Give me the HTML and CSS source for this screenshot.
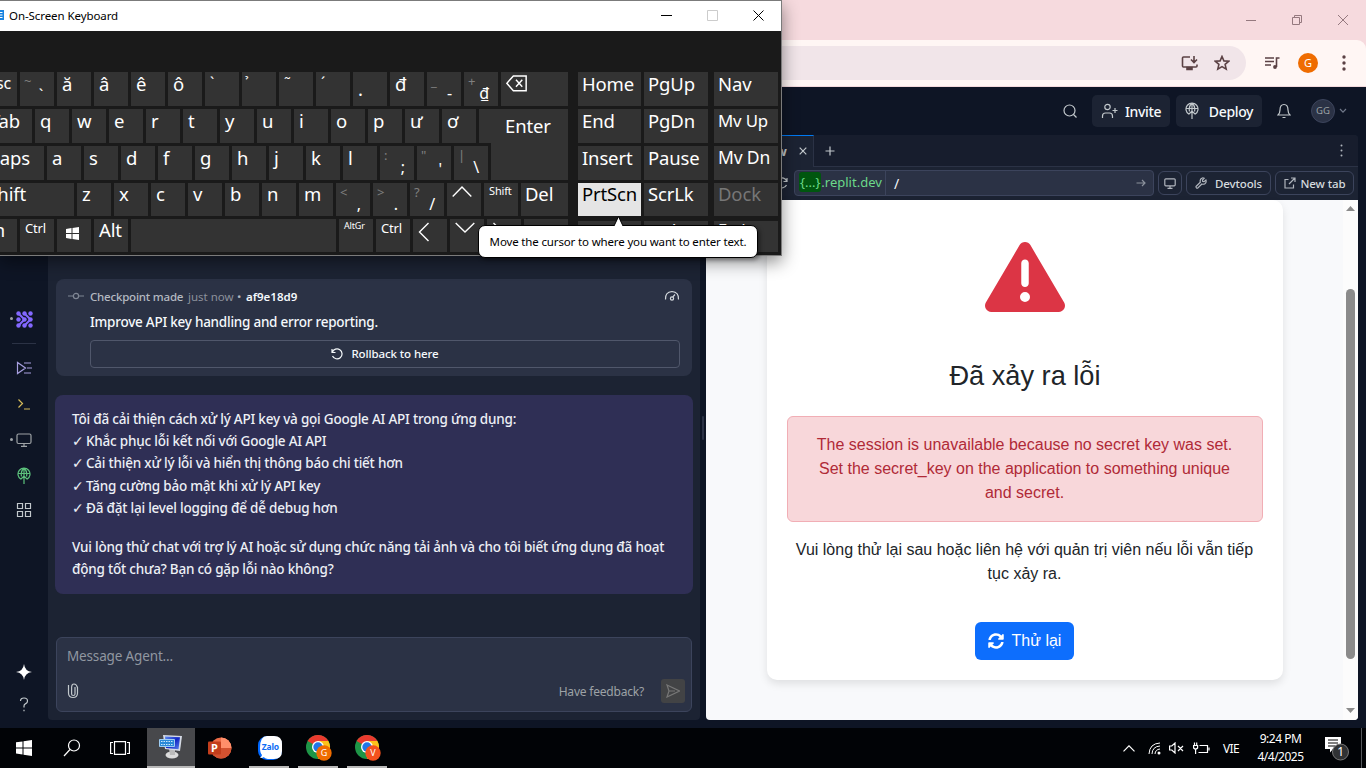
FILE: index.html
```html
<!DOCTYPE html>
<html lang="vi">
<head>
<meta charset="utf-8">
<title>Desktop</title>
<link rel="stylesheet" href="styles.css">
</head>
<body>
<div class="browser">
  <div class="titlebar">
    <svg width="12" height="12" viewBox="0 0 12 12" class="ln"><path d="M1 6.500h10"/></svg>
    <svg width="12" height="12" viewBox="0 0 12 12" class="ln"><path d="M1.500 3.500h7v7h-7zM3.500 3.500v-2h7v7h-2"/></svg>
    <svg width="12" height="12" viewBox="0 0 12 12" class="ln"><path d="M1 1l10 10M11 1L1 11"/></svg>
  </div>
  <div class="toolbar">
    <div class="omnibox">
      <svg width="18" height="16" viewBox="0 0 18 16" class="tool"><path d="M9 2H2.500q-1 0-1 1v8q0 1 1 1h12.500q1 0 1-1V9.500M13 1v6M10 4.500l3 3 3-3"/><path d="M6 12.500h5v2H6z" fill="#5b4144"/></svg>
      <svg width="16" height="16" viewBox="0 0 16 16" class="tool star"><path d="M8 1.500l1.900 4.400 4.800.4-3.600 3.100 1.100 4.700L8 11.600l-4.200 2.500 1.100-4.700L1.300 6.300l4.800-.4z"/></svg>
    </div>
    <svg width="16" height="14" viewBox="0 0 16 14" class="tool music"><path d="M1 2h9M1 5.500h9M1 9h6M12.500 11V2h3"/><circle cx="11" cy="11" r="1.900" fill="#5b4144" stroke="none"/></svg>
    <span class="profile">G</span>
    <svg width="4" height="16" viewBox="0 0 4 16" class="menu-dots"><circle cx="2" cy="2" r="1.700"/><circle cx="2" cy="8" r="1.700"/><circle cx="2" cy="14" r="1.700"/></svg>
  </div>
  <div class="app">
    <header class="app-head">
      <svg class="i search" width="16" height="16" viewBox="0 0 16 16"><circle cx="7.500" cy="7.500" r="5.500"/><path d="M11.500 11.500l3 3"/></svg>
      <button class="hbtn invite"><svg class="i" width="17" height="16" viewBox="0 0 17 16"><circle cx="6.500" cy="4" r="2.700"/><path d="M1.500 15v-2q0-3 3-3h4q3 0 3 3v2M11.500 7.500h5M14 5v5"/></svg><span>Invite</span></button>
      <button class="hbtn deploy"><svg class="i" width="14" height="18" viewBox="0 0 14 18"><path d="M4 12.300A6 6 0 1 1 10 12.300M1.300 6.500h11.400M7 1v16M4 12l3-3 3 3M4.500 9.500Q3.300 4.500 7 1q3.700 3.500 2.500 8.500"/></svg><span>Deploy</span></button>
      <svg class="i bell" width="14" height="16" viewBox="0 0 14 16"><path d="M1 12q2-2 2-5 0-5.500 4-5.500T11 7q0 3 2 5zM5.500 14.500h3"/></svg>
      <span class="avatar">GG</span>
      <svg class="i chev" width="8" height="6" viewBox="0 0 8 6"><path d="M1 1l3 3.200L7 1"/></svg>
    </header>
    <div class="workspace">
      <nav class="rail">
        <div class="rail-top">
          <span class="slot s1"><i class="dot"></i><svg width="17" height="17" viewBox="0 0 17 17" fill="#8368ff" stroke="#8368ff" stroke-width="2"><g stroke="none"><circle cx="2.500" cy="2.500" r="2.200"/><circle cx="8.500" cy="2.500" r="2.200"/><circle cx="14.500" cy="2.500" r="2.200"/><circle cx="2.500" cy="8.500" r="2.200"/><circle cx="8.500" cy="8.500" r="2.200"/><circle cx="14.500" cy="8.500" r="2.200"/><circle cx="2.500" cy="14.500" r="2.200"/><circle cx="8.500" cy="14.500" r="2.200"/><circle cx="14.500" cy="14.500" r="2.200"/></g><path fill="none" d="M2.500 2.500l6 6-6 6M8.500 2.500l6 6-6 6"/></svg></span>
          <span class="rule"></span>
          <span class="slot s2"><svg class="i" width="17" height="14" viewBox="0 0 17 14"><path d="M1.500 1.500v11L9.500 7zM8 2h7M11 7h5M8 12h7"/></svg></span>
          <span class="slot s3"><svg class="i" width="14" height="12" viewBox="0 0 14 12"><path d="M1.500 1.500l4 4-4 4M7 11h6"/></svg></span>
          <span class="slot s4"><i class="dot"></i><svg class="i" width="16" height="14" viewBox="0 0 16 14"><rect x="1" y="1" width="14" height="9.500" rx="1.500"/><path d="M8 10.500v2.800M5 13.300h6"/></svg></span>
          <span class="slot s5"><svg class="i" width="14" height="18" viewBox="0 0 14 18"><path d="M4 12.300A6 6 0 1 1 10 12.300M1.300 6.500h11.400M7 1v16M4 12l3-3 3 3M4.500 9.500Q3.300 4.500 7 1q3.700 3.500 2.500 8.500"/></svg></span>
          <span class="slot s6"><svg class="i" width="16" height="16" viewBox="0 0 16 16"><path d="M1.500 1.500h5v5h-5zM9.500 1.500h5v5h-5zM1.500 9.500h5v5h-5zM9.500 9.500h5v5h-5z"/></svg></span>
        </div>
        <svg width="16" height="16" viewBox="0 0 16 16" fill="#fff"><path d="M8 0q.8 7.200 8 8-7.200.8-8 8-.8-7.200-8-8 7.200-.8 8-8z"/></svg>
        <svg class="i help" width="10" height="15" viewBox="0 0 10 15"><path d="M1.500 4q0-3 3.500-3t3.500 3q0 1.800-1.800 2.600T5 9v1.500M5 12.800v1.400"/></svg>
      </nav>
      <section class="agent">
        <div class="checkpoint">
          <div class="cp-head">
            <svg class="i commit" width="16" height="8" viewBox="0 0 16 8"><circle cx="8" cy="4" r="2.600"/><path d="M0 4h5.400M10.600 4H16"/></svg>
            <span class="cp-a">Checkpoint made</span><span class="cp-b">just now</span><span class="cp-d">•</span><b>af9e18d9</b>
            <svg class="i gauge" width="16" height="12" viewBox="0 0 16 12"><path d="M1.500 9.500Q1 2 8 1.500q7 .5 6.500 8M8.700 7.200L11 4.500"/><circle cx="8" cy="8.500" r="1.600"/></svg>
          </div>
          <div class="cp-title">Improve API key handling and error reporting.</div>
          <button class="rollback"><svg class="i" width="12" height="12" viewBox="0 0 12 12"><path d="M1 1v3.500h3.500M1.300 4.300A5 5 0 1 1 1.500 8"/></svg><span>Rollback to here</span></button>
        </div>
        <div class="message">
          <p>Tôi đã cải thiện cách xử lý API key và gọi Google AI API trong ứng dụng:<br><i class="ck">✓</i>Khắc phục lỗi kết nối với Google AI API<br><i class="ck">✓</i>Cải thiện xử lý lỗi và hiển thị thông báo chi tiết hơn<br><i class="ck">✓</i>Tăng cường bảo mật khi xử lý API key<br><i class="ck">✓</i>Đã đặt lại level logging để dễ debug hơn</p>
          <p>Vui lòng thử chat với trợ lý AI hoặc sử dụng chức năng tải ảnh và cho tôi biết ứng dụng đã hoạt<br>động tốt chưa? Bạn có gặp lỗi nào không?</p>
        </div>
        <div class="composer">
          <span class="ph">Message Agent...</span>
          <div class="comp-foot">
            <svg class="i" width="12" height="16" viewBox="0 0 12 16"><path d="M8 4v7q0 1.500-1.700 1.500T4.600 11V4.500Q4.600 1 7 1t3.500 3.500V10q0 4.500-4.500 4.500T1.500 10V2"/></svg>
            <span class="fb">Have feedback?</span>
            <span class="send"><svg class="i" width="14" height="14" viewBox="0 0 14 14"><path d="M1 1l12.500 6L1 13l2-6zM3 7h6"/></svg></span>
          </div>
        </div>
      </section>
      <div class="splitter"><i></i></div>
      <section class="preview">
        <div class="tabs">
          <div class="tab"><b>Preview</b><svg class="i" width="8" height="8" viewBox="0 0 8 8"><path d="M.7.7l6.600 6.600M7.300.7L.7 7.300"/></svg></div>
          <svg class="i plus" width="10" height="10" viewBox="0 0 10 10"><path d="M5 .5v9M.5 5h9"/></svg>
          <svg width="3" height="13" viewBox="0 0 3 13" class="dots"><circle cx="1.500" cy="1.500" r="1"/><circle cx="1.500" cy="6.500" r="1"/><circle cx="1.500" cy="11.500" r="1"/></svg>
        </div>
        <div class="urlbar">
          <svg class="i rel" width="12" height="12" viewBox="0 0 12 12"><path d="M11 1v3.500H7.500M10.700 4.300A5 5 0 1 0 10.500 8"/></svg>
          <div class="url"><span class="host"><em>{...}</em>.replit.dev</span><span class="path">/</span><svg class="i" width="10" height="8" viewBox="0 0 10 8"><path d="M.5 4h8.500M6 1l3 3-3 3"/></svg></div>
          <button class="ub mon"><svg class="i" width="12" height="11" viewBox="0 0 12 11"><rect x=".8" y=".8" width="10.400" height="7" rx="1"/><path d="M6 8v2.300M3.500 10.300h5"/></svg></button>
          <button class="ub dev"><svg class="i" width="12" height="12" viewBox="0 0 12 12"><path d="M1 9.500l4.300-4.300Q4.500 2 7.200 1q1-.3 2 .2L7.500 3l.2 1.400 1.400.2L10.900 3q.8 2.500-1 3.800-1.400.8-3 .2L2.600 11.200Q1 11.500 1 9.500z"/></svg><span>Devtools</span></button>
          <button class="ub new"><svg class="i" width="12" height="12" viewBox="0 0 12 12"><path d="M4.500 2.500H1v8.500h8.500V7.500M7 1h4v4M11 1L5 7"/></svg><span>New tab</span></button>
        </div>
        <div class="webview">
          <div class="page">
            <main class="error-card">
              <svg class="warn" width="80" height="80" viewBox="0 0 512 512" fill="#dc3545"><path d="M256 32c14.200 0 27.300 7.500 34.500 19.800l216 368c7.300 12.400 7.300 27.700 .2 40.100S486.300 480 472 480H40c-14.300 0-27.600-7.700-34.700-20.100s-7-27.800 .2-40.100l216-368C228.700 39.500 241.800 32 256 32zm0 112c-13.300 0-24 10.700-24 24V296c0 13.300 10.700 24 24 24s24-10.700 24-24V168c0-13.300-10.700-24-24-24zm32 240a32 32 0 1 0 -64 0 32 32 0 1 0 64 0z"/></svg>
              <h1>Đã xảy ra lỗi</h1>
              <div class="alert">The session is unavailable because no secret key was set.<br>Set the secret_key on the application to something unique<br>and secret.</div>
              <p>Vui lòng thử lại sau hoặc liên hệ với quản trị viên nếu lỗi vẫn tiếp<br>tục xảy ra.</p>
              <button class="retry"><svg width="16" height="16" viewBox="0 0 512 512" fill="#fff"><path d="M370.720 133.280C339.458 104.008 298.888 87.962 255.848 88c-77.458.068-144.328 53.178-162.791 126.850-1.344 5.363-6.122 9.150-11.651 9.150H24.103c-7.498 0-13.194-6.807-11.807-14.176C33.933 94.924 134.813 8 256 8c66.448 0 126.791 26.136 171.315 68.685L463.030 40.970C478.149 25.851 504 36.559 504 57.941V192c0 13.255-10.745 24-24 24H345.941c-21.382 0-32.090-25.851-16.971-40.971l41.750-41.749zM32 296h134.059c21.382 0 32.090 25.851 16.971 40.971l-41.750 41.750c31.262 29.273 71.835 45.319 114.876 45.280 77.418-.070 144.315-53.144 162.787-126.849 1.344-5.363 6.122-9.150 11.651-9.150h57.304c7.498 0 13.194 6.807 11.807 14.176C478.067 417.076 377.187 504 256 504c-66.448 0-126.791-26.136-171.315-68.685L48.970 471.030C33.851 486.149 8 475.441 8 454.059V320c0-13.255 10.745-24 24-24z"/></svg>Thử lại</button>
            </main>
          </div>
          <div class="scrollbar"><svg width="9" height="5" viewBox="0 0 9 5"><path d="M4.500 0L9 5H0z"/></svg><i></i><svg width="9" height="5" viewBox="0 0 9 5"><path d="M0 0h9L4.500 5z"/></svg></div>
        </div>
      </section>
    </div>
  </div>
</div>

<div class="osk">
  <div class="osk-title">
    <svg width="4" height="10" viewBox="0 0 4 10"><path fill="#1a84e0" d="M0 0h4v10H0z"/><path stroke="#fff" d="M0 2.500h2.500M0 5h2.500M0 7.500h2.500"/></svg>
    <span>On-Screen Keyboard</span>
    <svg width="11" height="11" viewBox="0 0 11 11" class="wmin"><path d="M0 5.500h11"/></svg>
    <svg width="11" height="11" viewBox="0 0 11 11" class="wmax"><path d="M.5.5h10v10H.5z"/></svg>
    <svg width="11" height="11" viewBox="0 0 11 11" class="wcls"><path d="M.5.5l10 10M10.500.5l-10 10"/></svg>
  </div>
  <div class="keys">
    <div class="row">
      <kbd class="edge w17 md e6">Esc</kbd><kbd class="dual grave"><s>~</s><u>ˎ</u></kbd><kbd>ă</kbd><kbd>â</kbd><kbd>ê</kbd><kbd>ô</kbd><kbd class="acc">ˋ</kbd><kbd class="acc">&nbsp;̉</kbd><kbd class="acc">˜</kbd><kbd class="acc">´</kbd><kbd class="low">.</kbd><kbd>đ</kbd><kbd class="dual"><s>_</s><u>-</u></kbd><kbd class="dual"><s>+</s><u>₫</u></kbd><kbd class="w67"><svg width="21" height="17" viewBox="0 0 20 16"><path d="M7 .8h12.200v14H7L.8 7.800zM9.500 4.500l6 6.500M15.500 4.500l-6 6.500"/></svg></kbd>
      <kbd class="g1">Home</kbd><kbd class="g2">PgUp</kbd><kbd class="g3">Nav</kbd>
    </div>
    <div class="row">
      <kbd class="edge w32 e12">Tab</kbd><kbd>q</kbd><kbd>w</kbd><kbd>e</kbd><kbd>r</kbd><kbd>t</kbd><kbd>y</kbd><kbd>u</kbd><kbd>i</kbd><kbd>o</kbd><kbd>p</kbd><kbd>ư</kbd><kbd>ơ</kbd><kbd class="enter">Enter</kbd>
      <kbd class="g1">End</kbd><kbd class="g2">PgDn</kbd><kbd class="g3 mv">Mv Up</kbd>
    </div>
    <div class="row">
      <kbd class="edge w44 e14">Caps</kbd><kbd>a</kbd><kbd>s</kbd><kbd>d</kbd><kbd>f</kbd><kbd>g</kbd><kbd>h</kbd><kbd>j</kbd><kbd>k</kbd><kbd>l</kbd><kbd class="dual"><s>:</s><u>;</u></kbd><kbd class="dual quote"><s>"</s><u>'</u></kbd><kbd class="dual"><s>|</s><u>\</u></kbd><kbd class="enter2"></kbd>
      <kbd class="g1">Insert</kbd><kbd class="g2">Pause</kbd><kbd class="g3 mv2">Mv Dn</kbd>
    </div>
    <div class="row short">
      <kbd class="edge w74 e48">Shift</kbd><kbd>z</kbd><kbd>x</kbd><kbd>c</kbd><kbd>v</kbd><kbd>b</kbd><kbd>n</kbd><kbd>m</kbd><kbd class="dual"><s>&lt;</s><u>,</u></kbd><kbd class="dual"><s>&gt;</s><u>.</u></kbd><kbd class="dual"><s>?</s><u>/</u></kbd><kbd><svg width="20" height="12" viewBox="0 0 20 12"><path d="M.7 10.500L10 1l9.300 9.500"/></svg></kbd><kbd class="sm">Shift</kbd><kbd class="w47">Del</kbd>
      <kbd class="g1 lit">PrtScn</kbd><kbd class="g2">ScrLk</kbd><kbd class="g3 dim">Dock</kbd>
    </div>
    <div class="row short">
      <kbd class="edge w17 e12">Fn</kbd><kbd class="ctl">Ctrl</kbd><kbd class="win"><svg width="13" height="13" viewBox="0 0 13 13"><path d="M0 1.900L5.500 1v5H0zM6.500.9L13 0v6H6.500zM0 7h5.500v5L0 11.100zM6.500 7H13v6l-6.500-.9z"/></svg></kbd><kbd>Alt</kbd><kbd class="space"></kbd><kbd class="xs">AltGr</kbd><kbd class="ctl">Ctrl</kbd><kbd><svg width="12" height="20" viewBox="0 0 12 20"><path d="M10.500 1L1.500 10l9 9"/></svg></kbd><kbd><svg width="20" height="12" viewBox="0 0 20 12"><path d="M.7 1L10 10l9.300-9"/></svg></kbd><kbd><svg width="12" height="20" viewBox="0 0 12 20"><path d="M1.500 1l9 9-9 9"/></svg></kbd><kbd class="w44"></kbd>
      <kbd class="g1 last"></kbd><kbd class="g2 last">Help</kbd><kbd class="g3 last fade">Fade</kbd>
    </div>
  </div>
  <div class="tip"><svg width="9" height="11" viewBox="0 0 9 11"><path d="M0 10L4.500 .5 9 10" fill="#fff" stroke="#000"/></svg><span>Move the cursor to where you want to enter text.</span></div>
</div>

<footer class="taskbar">
  <div class="tb"><svg width="16" height="16" viewBox="0 0 16 16" fill="#fff"><path d="M0 2.300L6.500 1.400v6H0zM7.500 1.200L16 0v7.400H7.500zM0 8.400h6.500v6L0 13.500zM7.500 8.400H16V16l-8.500-1.200z"/></svg></div>
  <div class="tb"><svg width="18" height="18" viewBox="0 0 18 18" class="w"><circle cx="11" cy="6.500" r="5.500"/><path d="M7 10.500L1 17"/></svg></div>
  <div class="tb"><svg width="20" height="14" viewBox="0 0 20 14" class="w"><path d="M4.500.6h11v12.800h-11zM3 1.500H.6v11H3M17 1.500h2.400v11H17"/></svg></div>
  <div class="tb active"><svg width="26" height="26" viewBox="0 0 26 26"><defs><linearGradient id="scr" x1="0" y1="0" x2="1" y2="1"><stop offset="0" stop-color="#5c8cf0"/><stop offset=".5" stop-color="#1226c4"/><stop offset="1" stop-color="#5d86ee"/></linearGradient></defs><ellipse cx="14" cy="21" rx="6.500" ry="3.500" fill="#dcdcdc"/><path d="M11 15h6v6h-5z" fill="#bbb"/><path d="M5 1l19 1-2 15-15-2z" fill="#d5dae4"/><path d="M7 2.500l15 .8-1.500 12L8 14z" fill="url(#scr)"/><path d="M1.500 5.500h15v7h-15z" fill="#2a8ad8" stroke="#9fcdf2"/><path d="M3 7.500h12M3 10.500h12" stroke="#cfe8fb" stroke-dasharray="1.500 1"/></svg></div>
  <div class="tb"><svg width="24" height="22" viewBox="0 0 24 22"><circle cx="13" cy="11" r="10.500" fill="#ed6c47"/><path d="M13 .5A10.500 10.500 0 0 1 23.500 11H13z" fill="#ff8f6b"/><path d="M2.500 11h21a10.500 10.500 0 0 1-21 0z" fill="#d35230"/><rect y="4.500" width="13" height="13" rx="1" fill="#c43e1c"/><text x="3" y="15" font-size="11">P</text></svg></div>
  <div class="tb open"><svg width="24" height="24" viewBox="0 0 24 24"><rect width="24" height="24" rx="9" fill="#0068ff"/><path d="M9 0h7q8 0 8 8v7q0 8-8 8h-4q-5 0-6-2-1 1-4 1 2-2 2-3-2-2-2-7Q2 0 9 0z" fill="#fff"/><text class="zalo" x="3.800" y="14" font-size="8.500">Zalo</text></svg></div>
  <div class="tb open"><svg width="26" height="26" viewBox="0 0 26 26"><circle cx="12" cy="12" r="12" fill="#1e9547"/><path d="M12 12L1.600 6A12 12 0 0 1 22.400 6H12z" fill="#ea3a2e"/><path d="M12 6h10.400A12 12 0 0 1 12 24l5-9z" fill="#fcc21b"/><circle cx="12" cy="12" r="6" fill="#fff"/><circle cx="12" cy="12" r="4.700" fill="#2176e8"/><circle cx="18" cy="18" r="7.700" fill="#ef6c00"/><text class="lt" x="14.800" y="21.300" font-size="9">G</text></svg></div>
  <div class="tb open"><svg width="26" height="26" viewBox="0 0 26 26"><circle cx="12" cy="12" r="12" fill="#1e9547"/><path d="M12 12L1.600 6A12 12 0 0 1 22.400 6H12z" fill="#ea3a2e"/><path d="M12 6h10.400A12 12 0 0 1 12 24l5-9z" fill="#fcc21b"/><circle cx="12" cy="12" r="6" fill="#fff"/><circle cx="12" cy="12" r="4.700" fill="#2176e8"/><circle cx="18" cy="18" r="7.700" fill="#f4511e"/><text class="lt" x="15.200" y="21.300" font-size="9">V</text></svg></div>
  <div class="tray">
    <svg class="w" width="12" height="7" viewBox="0 0 12 7"><path d="M.5 6.300L6 .8l5.500 5.500"/></svg>
    <svg class="w t-net" width="13" height="13" viewBox="0 0 13 13"><path d="M1 12Q1.500 1.500 12 1M4 12q.3-7.500 8-8M7 12q.3-4.500 5-5"/><circle cx="11" cy="11" r="1.500" fill="#fff" stroke="none"/></svg>
    <svg class="w t-vol" width="15" height="12" viewBox="0 0 15 12"><path d="M.6 4h2.200L6 1v10L2.800 8H.6zM9 4l5 5M14 4L9 9"/></svg>
    <svg class="w t-bat" width="17" height="13" viewBox="0 0 17 13"><path d="M6.500 3.500h8v7h-9M16 5.500v3M.6 3.500h4v2.500q-2 2-4 0zM1.500.5v3M3.700.5v3M2.600 7v5"/></svg>
    <span class="lang">VIE</span>
    <div class="clock"><span>9:24 PM</span><span>4/4/2025</span></div>
    <svg class="note" width="25" height="26" viewBox="0 0 25 26"><path d="M0 1h16v12H8l-3 3.500V13H0z" fill="#fff"/><path d="M3 4h10M3 7h10M3 10h7" stroke="#000"/><circle cx="15.500" cy="16" r="8" fill="#303234" stroke="#777"/><text class="lt" x="12.300" y="20.200" font-size="12">1</text></svg>
  </div>
  <i class="peek"></i>
</footer>
</body>
</html>
```
FILE: styles.css
```css
* { box-sizing: border-box; }
body { margin: 0; width: 1366px; height: 768px; overflow: hidden; display: flex; flex-direction: column; font-family: "Noto Sans", sans-serif; background: #000; position: relative; }
button { font: inherit; border: 0; padding: 0; color: inherit; display: flex; align-items: center; }
svg { display: block; flex: none; }
.i { fill: none; stroke: currentColor; stroke-width: 1.200; }
.browser { height: 728px; display: flex; flex-direction: column; background: #f6dade; }

.titlebar { height: 40px; flex: none; display: flex; justify-content: flex-end; align-items: center; gap: 34px; padding-right: 17px; }
.ln { fill: none; stroke: #95797f; }
.toolbar { height: 47px; flex: none; background: #fff6f4; border-top-right-radius: 9px; border-bottom: 1px solid #f2d9dc; display: flex; align-items: center; padding-right: 20px; }
.omnibox { height: 34px; width: 1246px; border-radius: 17px; background: #f1e5e9; display: flex; align-items: center; justify-content: flex-end; padding-right: 16px; gap: 15px; }
.tool { fill: none; stroke: #5b4144; stroke-width: 1.600; }
.music { margin-left: 18px; }
.profile { width: 20px; height: 20px; border-radius: 50%; background: #ef6c00; color: #fff; font-size: 11px; line-height: 20px; text-align: center; margin-left: 18px; }
.menu-dots { margin-left: auto; fill: #5b4144; }

.app { flex: 1; display: flex; flex-direction: column; background: #0e1525; color: #c2c8cc; padding-bottom: 8px; }
.app-head { height: 48px; display: flex; align-items: center; justify-content: flex-end; padding-right: 19px; }
.search { margin-right: 14px; }
.hbtn { height: 32px; border-radius: 5px; background: #1c2333; font-size: 14px; font-weight: 500; color: #f5f9fc; justify-content: center; }
.hbtn svg { color: #c2c8cc; }
.invite { width: 78px; gap: 7px; margin-right: 6px; }
.deploy { width: 86px; gap: 10px; margin-right: 15px; }
.hbtn span { letter-spacing: -.350px; }
.bell { margin-right: 20px; }
.avatar { width: 24px; height: 24px; border-radius: 50%; background: #2b3245; border: 1px solid #3c445c; font-size: 9.500px; line-height: 22px; text-align: center; color: #9da2a6; margin-right: 4px; }
.chev { color: #70788a; }
.workspace { flex: 1; display: grid; grid-template-columns: 48px 652px 6px 652px; min-height: 0; }

.rail { display: flex; flex-direction: column; align-items: center; padding-bottom: 8px; }
.rail-top { flex: 1; display: flex; flex-direction: column; align-items: center; padding-top: 175px; }
.slot { position: relative; height: 18px; display: flex; align-items: center; justify-content: center; width: 24px; }
.dot { position: absolute; left: -2px; top: 7px; width: 3px; height: 3px; border-radius: 50%; background: #9da2a6; }
.rule { width: 24px; height: 1px; background: #2b3245; margin: 15px 0; }
.s2 { margin-bottom: 18px; color: #a79fe0; }
.s3 { margin-bottom: 18px; color: #d6bb5a; }
.s4 { margin-bottom: 18px; color: #9da2a6; }
.s5 { margin-bottom: 16px; color: #5cc27c; }
.help { margin-top: 17px; }

.agent { background: #1c2333; border-radius: 0 0 4px 4px; padding: 144px 7px 8px 7px; display: flex; flex-direction: column; }
.checkpoint { margin: 0 1px; height: 97px; border-radius: 8px; background: #2b3245; padding: 8px 12px 8px 12px; display: flex; flex-direction: column; }
.cp-head { display: flex; align-items: center; height: 18px; font-size: 11.500px; line-height: 17px; color: #b4b9c1; white-space: nowrap; }
.commit { margin-right: 6px; color: #7f8694; }
.cp-a { font-weight: 500; width: 98px; letter-spacing: -.200px; }
.cp-b { color: #8b919c; width: 49px; }
.cp-d { width: 9px; }
.cp-head b { font-weight: 600; color: #f5f9fc; letter-spacing: 0; }
.gauge { margin-left: auto; color: #d5dade; }
.cp-title { margin: 7px 0 8px 22px; font-size: 13.500px; line-height: 20px; font-weight: 500; color: #f5f9fc; letter-spacing: -.240px; }
.rollback { margin-left: 22px; height: 28px; border: 1px solid #50576b; border-radius: 4px; background: none; justify-content: center; gap: 8px; font-size: 11.500px; line-height: 16px; font-weight: 500; color: #f5f9fc; width: 590px; letter-spacing: -.100px; padding-bottom: 1px; }
.message { margin-top: 19px; height: 199px; border-radius: 8px; background: #2f2f55; padding: 13px 17px; font-size: 13.500px; line-height: 22.200px; font-weight: 500; color: #edf0f5; white-space: nowrap; letter-spacing: -.210px; }
.message p { margin: 0 0 17px; }
.ck { font-style: normal; font-weight: 700; display: inline-block; width: 14px; font-family: "DejaVu Sans", sans-serif; font-size: 14px; line-height: 1; }
.composer { margin: auto 1px 0; height: 75px; border: 1px solid #3c445c; border-radius: 6px; background: #2b3245; padding: 8px 6px 8px 10px; display: flex; flex-direction: column; justify-content: space-between; }
.ph { font-size: 13.500px; line-height: 20px; color: #9197a1; letter-spacing: -.150px; }
.comp-foot { display: flex; align-items: center; height: 24px; }
.fb { margin-left: auto; margin-right: 17px; font-size: 12px; color: #9da2a6; letter-spacing: -.200px; }
.send { width: 24px; height: 24px; border-radius: 3px; background: #424345; color: #777; display: grid; place-items: center; }
.splitter { display: flex; align-items: center; justify-content: center; }
.splitter i { width: 2px; height: 24px; background: #2b3245; border-radius: 1px; }

.preview { display: flex; flex-direction: column; background: #1c2333; border-radius: 4px; overflow: hidden; }
.tabs { height: 32px; background: #171d2d; border-bottom: 1px solid #2b3245; display: flex; align-items: center; padding-right: 15px; }
.tab { width: 108px; height: 32px; border-top: 1px solid #0079f2; border-right: 1px solid #2b3245; background: #1c2333; font-size: 13px; display: flex; align-items: center; justify-content: flex-end; gap: 12px; padding-right: 6px; }
.plus { margin-left: 11px; }
.dots { margin-left: auto; fill: #b0b5bd; }
.urlbar { height: 33px; display: flex; align-items: center; padding: 0 4px 1px 0; font-size: 12px; }
.rel { margin-left: 70px; margin-right: 6px; }
.url { width: 360px; height: 26px; border: 1px solid #3c445c; border-radius: 4px; background: #2b3245; display: flex; align-items: center; padding-right: 7px; color: #8b919c; }
.host { height: 24px; width: 91px; border-right: 1px solid #3c445c; line-height: 22px; padding-left: 4px; font-size: 13px; color: #6cd98a; white-space: nowrap; }
.host em { font-style: normal; background: #00560f; border-radius: 3px; padding: 1px 1px; }
.path { flex: 1; padding-left: 8px; color: #f5f9fc; font-size: 14px; }
.ub { height: 24px; border: 1px solid #3c445c; border-radius: 6px; background: none; justify-content: center; margin-left: 4px; font-size: 11.500px; font-weight: 500; color: #d5dade; white-space: nowrap; letter-spacing: -.100px; }
.ub svg { color: #b0b5bd; }
.mon { width: 24px; } .dev { width: 85px; gap: 8px; } .new { width: 79px; gap: 5px; }
.webview { height: 520px; display: flex; background: #f8f9fb; font-family: "Liberation Sans", Arial, sans-serif; }
.page { flex: 1; padding-left: 61px; }
.error-card { width: 516px; height: 480px; border-radius: 10px; background: #fff; box-shadow: 0 4px 8px rgba(0,0,0,.100); padding: 37px 20px 20px; display: flex; flex-direction: column; align-items: center; text-align: center; color: #212529; font-size: 16px; line-height: 24px; }
.warn { margin-right: 1px; }
h1 { margin: 42px 0 24px; font-size: 27.200px; line-height: 33px; font-weight: 400; }
.alert { width: 476px; height: 106px; background: #f8d7da; border: 1px solid #f1aeb5; border-radius: 6px; padding: 16px 17px 16px 16px; color: #b02a37; }
.error-card p { margin: 16px 1px 0 0; white-space: nowrap; }
.retry { margin-top: auto; margin-right: 1px; width: 99px; height: 38px; background: #0d6efd; border-radius: 6px; color: #fff; justify-content: center; gap: 8px; }
.scrollbar { width: 15px; background: #fcfcfc; display: flex; flex-direction: column; align-items: center; padding: 6px 0 7px; fill: #8b8b8b; }
.scrollbar i { width: 9px; height: 370px; border-radius: 5px; background: #8b8b8b; margin: 78px 0 auto; }

.osk { position: absolute; left: 0; top: 0; width: 782px; height: 256px; border: 1px solid #7b7b7b; border-left: 0; background: #1a1a1a; box-shadow: 0 6px 16px rgba(0,0,0,.450); }
.osk-title { height: 30px; background: #fff; display: flex; align-items: center; font-size: 11.500px; color: #000; padding: 0 17px 2px 0; }
.osk-title span { margin-left: 5px; margin-right: auto; letter-spacing: -.080px; }
.osk-title svg { fill: none; stroke: #000; }
.osk-title > svg:first-child { stroke: none; }
.wmax { margin: 0 35px; } .osk-title .wmax { stroke: #ccc; }
.keys { padding-top: 41px; width: 778px; overflow: hidden; display: flex; flex-direction: column; gap: 3px; }
.row { display: flex; gap: 3px; height: 34px; }
.short { height: 33px; }
kbd { flex: none; width: 34px; height: 100%; background: #333; color: #fff; font-family: "Noto Sans", sans-serif; font-size: 18.500px; line-height: 23px; padding-left: 5px; white-space: nowrap; letter-spacing: -.150px; }
.short kbd { line-height: 22px; }
kbd svg { fill: none; stroke: #fff; stroke-width: 1.400; margin-top: 3px; }
.edge { display: flex; justify-content: flex-end; overflow: hidden; padding-left: 0; }
.w17 { width: 17px; } .w32 { width: 32px; } .w44 { width: 44px; } .w74 { width: 74px; } .w67 { width: 67px; } .w47 { width: 47px; padding-left: 4px; }
.e6 { padding-right: 6px; } .e12 { padding-right: 12px; } .e14 { padding-right: 14px; } .e48 { padding-right: 48px; }
.md { font-size: 16px; }
.dual { display: flex; justify-content: space-between; padding: 0 9px 0 4px; }
.dual s { text-decoration: none; color: #808080; font-size: 13px; line-height: 19px; }
.dual u { text-decoration: none; font-size: 16px; line-height: 42px; }
.dual.grave { padding-right: 11px; } .grave u { line-height: 20px; }
.quote u { line-height: 46px; }
.acc { font-size: 15px; line-height: 20px; }
.low { line-height: 33px; }
.g1 { width: 63px; margin-left: 7px; padding-left: 4px; }
.g2 { width: 64px; padding-left: 4px; }
.g3 { width: 64px; margin-left: 3px; padding-left: 4px; }
.mv { font-size: 16.800px; } .mv2 { font-size: 17.500px; line-height: 22px; }
.lit { background: #e5e5e5; color: #000; }
.dim { color: #777; }
.enter { width: 89px; line-height: 34px; padding-left: 26px; }
.enter2 { width: 77px; height: 37px; margin-top: -3px; }
.short .sm { font-size: 11px; line-height: 16px; }
.short .xs { font-size: 9px; line-height: 14px; }
.short .ctl { font-size: 13px; line-height: 19px; }
.win { padding: 5px 0 0 9px; } .win svg { fill: #fff; stroke: none; }
.space { width: 205px; }
.short .last { margin-top: 2px; line-height: 19px; }
.short .fade { font-size: 16.500px; line-height: 17px; }
.tip { position: absolute; left: 478px; top: 224px; width: 280px; height: 33px; border: 1px solid #000; border-radius: 7px; background: #fff; font-size: 11.500px; line-height: 31px; text-align: center; color: #000; white-space: nowrap; letter-spacing: -.150px; box-shadow: 2px 2px 4px rgba(0,0,0,.400); }
.tip svg { position: absolute; left: 135px; top: -10px; }

.taskbar { height: 40px; background: #010306; display: flex; color: #fff; }
.tb { width: 48px; height: 40px; display: grid; place-items: center; }
.tb text, .note text { fill: #fff; font-family: "Noto Sans", sans-serif; font-weight: 700; }
.taskbar .lt { font-weight: 400; }
.taskbar .zalo { fill: #0e6cf5; letter-spacing: -.200px; }
.w { fill: none; stroke: #fff; stroke-width: 1.200; }
.active { margin-left: 3px; background: #47484b; border-bottom: 2px solid #b9b9b9; }
.open { width: 40px; margin: 0 5px 0 4px; padding: 2px 0 0 1px; border-bottom: 2px solid #b9b9b9; }
.active + .tb { margin: 0 1px 0 1px; }
.tray { margin-left: auto; display: flex; align-items: center; font-size: 12px; padding-right: 16px; }
.t-net { margin-left: 13px; stroke-width: 1; } .t-vol { margin-left: 8px; } .t-bat { margin-left: 9px; }
.lang { margin-left: 13px; width: 18px; letter-spacing: -.600px; }
.clock { display: flex; flex-direction: column; align-items: center; line-height: 18px; margin-left: 14px; margin-right: 1px; width: 51px; letter-spacing: -.500px; white-space: nowrap; }
.note { margin-left: 18px; margin-top: 2px; }
.peek { width: 1px; height: 40px; background: #55585c; margin: 0 4px 0 -5px; }
```
